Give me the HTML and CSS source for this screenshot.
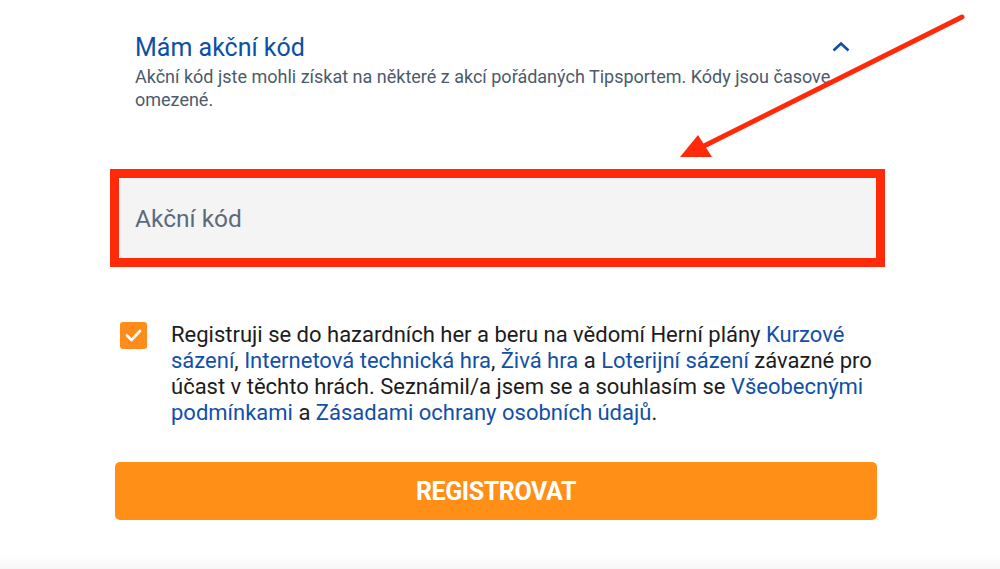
FILE: index.html
```html
<!DOCTYPE html>
<html lang="cs">
<head>
<meta charset="utf-8">
<link rel="stylesheet" href="styles.css">
</head>
<body>
<div class="page">
  <section class="promo">
    <div class="promo-head">
      <h2 class="promo-title">Mám akční kód</h2>
      <svg class="chevron" width="18" height="11" viewBox="0 0 18 11"><polyline points="1.5,9.5 9,2.5 16.5,9.5" fill="none" stroke="#0d4ea6" stroke-width="2.6"/></svg>
    </div>
    <p class="promo-desc">Akční kód jste mohli získat na některé z akcí pořádaných Tipsportem. Kódy jsou časove omezené.</p>
  </section>

  <div class="code-frame">
    <div class="code-input">Akční kód</div>
  </div>

  <div class="consent">
    <span class="checkbox">
      <svg width="27" height="27" viewBox="0 0 27 27"><polyline points="7,13.5 11.5,18 20,9" fill="none" stroke="#fff" stroke-width="2.6" stroke-linecap="round" stroke-linejoin="round"/></svg>
    </span>
    <p class="consent-text">Registruji se do hazardních her a beru na vědomí Herní plány <a>Kurzové sázení</a>, <a>Internetová technická hra</a>, <a>Živá hra</a> a <a>Loterijní sázení</a> závazné pro účast v těchto hrách. Seznámil/a jsem se a souhlasím se <a>Všeobecnými podmínkami</a> a <a>Zásadami ochrany osobních údajů</a>.</p>
  </div>

  <button class="submit">REGISTROVAT</button>

  <svg class="arrow" width="1000" height="569" viewBox="0 0 1000 569">
    <line x1="962" y1="17" x2="702" y2="147" stroke="#ff2a0a" stroke-width="5" stroke-linecap="round"/>
    <polygon points="680,157 712,157 698,135" fill="#ff2a0a"/>
  </svg>
</div>
</body>
</html>
```

FILE: styles.css
```css
* { box-sizing: border-box; }
html, body { margin: 0; padding: 0; background: #fff; }
body { font-family: Roboto, "Noto Sans", sans-serif; }
.page {
  position: relative;
  width: 1000px;
  height: 569px;
  overflow: hidden;
  background: linear-gradient(to bottom, #fff 0, #fff 556px, #f6f6f6 569px);
}
.promo { padding: 32px 0 0 135px; }
.promo-head {
  display: flex;
  justify-content: space-between;
  align-items: center;
  width: 715px;
}
.promo-title {
  margin: 0;
  font-size: 25px;
  line-height: 32px;
  font-weight: 400;
  color: #0d4ea6;
}
.chevron { display: block; margin-top: -3px; }
.promo-desc {
  margin: 1px 0 0;
  width: 735px;
  font-size: 18px;
  line-height: 23px;
  color: #4b5b6b;
}
.code-frame {
  margin: 58px 0 0 110px;
  width: 775px;
  border: 9px solid #ff2a0a;
}
.code-input {
  height: 80px;
  background: #f4f4f4;
  padding-left: 16px;
  display: flex;
  align-items: center;
  font-size: 24.5px;
  color: #5c6b7a;
}
.consent {
  display: flex;
  gap: 24px;
  margin: 55px 0 0 120px;
}
.checkbox {
  flex: none;
  width: 27px;
  height: 27px;
  border-radius: 3px;
  background: #ff8c1a;
}
.checkbox svg { display: block; }
.consent-text {
  margin: 0;
  width: 712px;
  font-size: 22px;
  line-height: 26px;
  color: #1c1c1c;
}
.consent-text a { color: #1150a8; text-decoration: none; }
.submit {
  display: block;
  margin: 36px 0 0 115px;
  width: 762px;
  height: 58px;
  border: none;
  border-radius: 5px;
  background: #ff8f17;
  color: #fff;
  font-family: Roboto, sans-serif;
  font-weight: 700;
  font-size: 25px;
  letter-spacing: -0.4px;
  padding: 0;
}
.arrow { position: absolute; left: 0; top: 0; pointer-events: none; }
```
